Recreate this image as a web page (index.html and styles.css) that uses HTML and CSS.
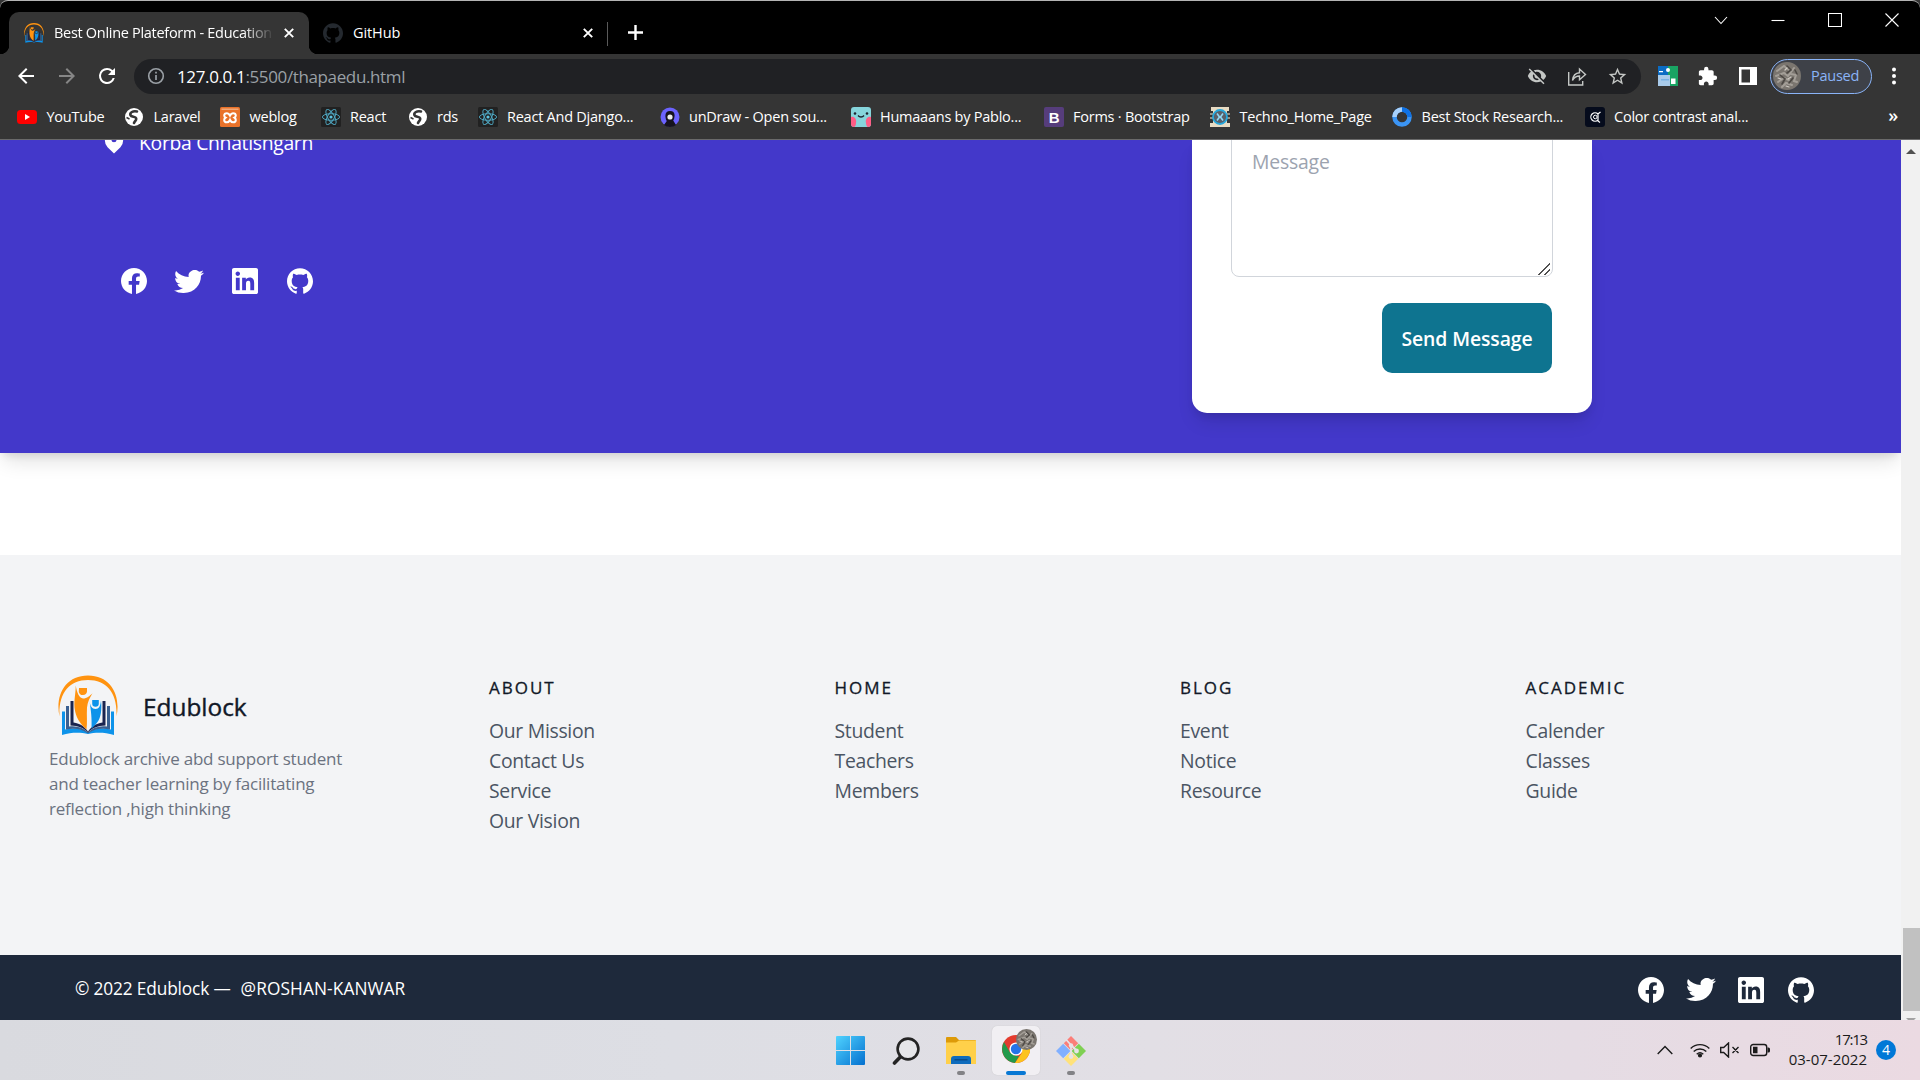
FILE: index.html
```
<!DOCTYPE html>
<html lang="en">
<head>
<meta charset="utf-8">
<title>Best Online Plateform - Education</title>
<link rel="stylesheet" href="styles.css">
</head>
<body>
<svg class="defs" aria-hidden="true">
  <defs>
    <symbol id="facebook" viewBox="0 0 24 24"><path d="M24 12.073c0-6.627-5.373-12-12-12s-12 5.373-12 12c0 5.990 4.388 10.954 10.125 11.854v-8.385H7.078v-3.470h3.047V9.430c0-3.007 1.792-4.669 4.533-4.669 1.312 0 2.686.235 2.686.235v2.953H15.830c-1.491 0-1.956.925-1.956 1.874v2.250h3.328l-.532 3.470h-2.796v8.385C19.612 23.027 24 18.062 24 12.073z"/></symbol>
    <symbol id="twitter" viewBox="0 2.250 24 19.500" preserveAspectRatio="none"><path d="M23.953 4.57a10 10 0 01-2.825.775 4.958 4.958 0 002.163-2.723c-.951.555-2.005.959-3.127 1.184a4.92 4.92 0 00-8.384 4.482C7.69 8.095 4.067 6.13 1.64 3.162a4.822 4.822 0 00-.666 2.475c0 1.71.87 3.213 2.188 4.096a4.904 4.904 0 01-2.228-.616v.06a4.923 4.923 0 003.946 4.827 4.996 4.996 0 01-2.212.085 4.936 4.936 0 004.604 3.417 9.867 9.867 0 01-6.102 2.105c-.39 0-.779-.023-1.17-.067a13.995 13.995 0 007.557 2.209c9.053 0 13.998-7.496 13.998-13.985 0-.21 0-.42-.015-.63A9.935 9.935 0 0024 4.59z"/></symbol>
    <symbol id="linkedin" viewBox="0 0 24 24"><path d="M20.447 20.452h-3.554v-5.569c0-1.328-.027-3.037-1.852-3.037-1.853 0-2.136 1.445-2.136 2.939v5.667H9.351V9h3.414v1.561h.046c.477-.9 1.637-1.85 3.37-1.85 3.601 0 4.267 2.37 4.267 5.455v6.286zM5.337 7.433c-1.144 0-2.063-.926-2.063-2.065 0-1.138.92-2.063 2.063-2.063 1.14 0 2.064.925 2.064 2.063 0 1.139-.925 2.065-2.064 2.065zm1.782 13.019H3.555V9h3.564v11.452zM22.225 0H1.771C.792 0 0 .774 0 1.729v20.542C0 23.227.792 24 1.771 24h20.451C23.2 24 24 23.227 24 22.271V1.729C24 .774 23.2 0 22.222 0h.003z"/></symbol>
    <symbol id="github" viewBox="0 0 24 24"><path d="M12 .297c-6.63 0-12 5.373-12 12 0 5.303 3.438 9.8 8.205 11.385.6.113.82-.258.82-.577 0-.285-.01-1.04-.015-2.04-3.338.724-4.042-1.61-4.042-1.61C4.422 18.07 3.633 17.7 3.633 17.7c-1.087-.744.084-.729.084-.729 1.205.084 1.838 1.236 1.838 1.236 1.07 1.835 2.809 1.305 3.495.998.108-.776.417-1.305.76-1.605-2.665-.3-5.466-1.332-5.466-5.93 0-1.31.465-2.38 1.235-3.22-.135-.303-.54-1.523.105-3.176 0 0 1.005-.322 3.3 1.23.96-.267 1.98-.399 3-.405 1.02.006 2.04.138 3 .405 2.28-1.552 3.285-1.23 3.285-1.23.645 1.653.24 2.873.12 3.176.765.84 1.23 1.91 1.23 3.22 0 4.61-2.805 5.625-5.475 5.92.42.36.81 1.096.81 2.22 0 1.606-.015 2.896-.015 3.286 0 .315.21.69.825.57C20.565 22.092 24 17.592 24 12.297c0-6.627-5.373-12-12-12"/></symbol>
    <symbol id="logo" viewBox="0 0 60 60">
      <path fill="#ff9310" d="M1.500 41C-3 20 7 0 30 0s33 20 28.500 41C59.500 18 49 4.500 30 4.500S.5 18 1.500 41z"/>
      <path fill="#0d93ea" d="M4 36h3v18c9-2 17-1 23 3 6-4 14-5 23-3V36h3v23.500c-10-3-19-2.500-26-1-7-1.500-16-2-26 1z"/>
      <path fill="#3a6091" d="M8 30.500h3V51c8-1 14 1 19 6 5-5 11-7 19-6V30.500h3V54c-9-2-17 0-22 4-5-4-13-6-22-4z"/>
      <path fill="#1a2450" d="M12.500 25.500h3V47c7 1 11 4 14.500 9 3.500-5 7.500-8 14.500-9V25.500h3V50c-8 0-14 3-17.500 7-3.500-4-9.500-7-17.500-7z"/>
      <path class="paper" d="M16 22h28v24c-7 1-11 4-14 9-3-5-7-8-14-9z"/>
      <path fill="#ff9310" d="M17.700 10C19 17 21 22.500 25 23c4 0 7-3 9.500-5.300C32 22 29.500 26 29 32c-.5 8 .5 15-.5 22C22 48 17.500 42 16.500 32 16 23 17.800 18 17.700 10z"/>
      <path fill="#ff9310" d="M21 12.500h8v3.500a4.200 4.200 0 0 1-8.200.5z"/>
      <path fill="#0d93ea" d="M31.500 25C32 30 34 33.500 37.500 33.500S42.500 30 43 25c1 9 0 17-3.500 21.500-2.500 3.500-4 4.500-6 6.500C34 42 33 36 31.500 25z"/>
      <path fill="#0d93ea" d="M34.200 24.500h6.600V28a3.300 3.300 0 0 1-6.600 0z"/>
    </symbol>
    <symbol id="globe" viewBox="0 0 20 20"><circle cx="10" cy="10" r="9" fill="#fff"/><path d="M13 4.500C9 3.500 5.500 5.600 6.500 8.200c.8 2 5.100 1 5.700 3.100.5 1.900-1.500 2.800-2.200 4.700" fill="none" stroke="#353535" stroke-width="2.600" stroke-linecap="round"/><path d="M2.500 10.500l3 1.500" stroke="#353535" stroke-width="1.500"/></symbol>
    <symbol id="react" viewBox="0 0 20 20"><rect width="20" height="20" rx="1.500" fill="#212121"/><g fill="none" stroke="#4fa9c4" stroke-width=".95"><ellipse cx="10" cy="10" rx="8.600" ry="3.300"/><ellipse cx="10" cy="10" rx="8.600" ry="3.300" transform="rotate(60 10 10)"/><ellipse cx="10" cy="10" rx="8.600" ry="3.300" transform="rotate(120 10 10)"/></g><circle cx="10" cy="10" r="1.600" fill="#5cc4e2"/></symbol>
    <symbol id="close" viewBox="0 0 10 10"><path d="M.8.8l8.400 8.400M9.200.8L.8 9.200" stroke="#fff" stroke-width="1.900" fill="none"/></symbol>
    <symbol id="avatar" viewBox="0 0 28 28"><circle cx="14" cy="14" r="14" fill="#7a756f"/><g fill="none" stroke-linecap="round"><path d="M4 9l7-5 5 4M3 14l8-3 4 3 6-8M5 20l6-4 5 2M9 25l4-4 6 2M18 12l5 1-2 6 3 1" stroke="#a39e97" stroke-width="2"/><path d="M7 13l5 4-3 5M14 4l4 4-4 3M20 16l-4 5M22 8l2 4" stroke="#4b4743" stroke-width="1.600"/><path d="M5 16l3 1M12 8l2-2M15 17l3-2M13 24l3 1" stroke="#cfcac3" stroke-width="1.200"/></g></symbol>
  </defs>
</svg>

<header class="browser">
  <div class="titlebar">
    <div class="tab active">
      <svg class="favicon" width="20" height="20"><use href="#logo"/></svg>
      <span class="tab-title fade">Best Online Plateform - Education</span>
      <svg class="x" width="10" height="10"><use href="#close"/></svg>
    </div>
    <div class="tab idle">
      <svg class="gh" width="20" height="20"><use href="#github"/></svg>
      <span class="tab-title">GitHub</span>
      <svg class="x" width="10" height="10"><use href="#close"/></svg>
    </div>
    <svg class="newtab" width="15" height="15" viewBox="0 0 15 15"><path d="M7.500 0v15M0 7.500h15" stroke="#fff" stroke-width="2.400"/></svg>
    <div class="window-controls">
      <svg width="14" height="14" viewBox="0 0 14 14"><path d="M1 4l6 6.500L13 4"/></svg>
      <svg width="14" height="14" viewBox="0 0 14 14"><path d="M.5 7.500h13"/></svg>
      <svg width="14" height="14" viewBox="0 0 14 14"><path d="M.5.5h13v13H.5z"/></svg>
      <svg width="14" height="14" viewBox="0 0 14 14"><path d="M.5.5l13 13M13.500.5l-13 13"/></svg>
    </div>
  </div>

  <div class="toolbar">
    <div class="nav">
      <svg width="24" height="24" viewBox="0 0 24 24" fill="#fff"><path d="M20 11H7.830l5.590-5.590L12 4l-8 8 8 8 1.410-1.410L7.830 13H20v-2z"/></svg>
      <svg width="24" height="24" viewBox="0 0 24 24" fill="#868686"><path d="M4 11h12.170l-5.590-5.590L12 4l8 8-8 8-1.410-1.410L16.170 13H4v-2z"/></svg>
      <svg width="24" height="24" viewBox="0 0 24 24" fill="#fff"><path d="M17.650 6.350A7.958 7.958 0 0 0 12 4a8 8 0 1 0 7.730 10h-2.080A6 6 0 1 1 12 6c1.660 0 3.140.69 4.220 1.780L13 11h7V4l-2.350 2.350z"/></svg>
    </div>
    <div class="omnibox">
      <svg width="18" height="18" viewBox="0 0 18 18"><circle cx="9" cy="9" r="7.300" fill="none" stroke="#9aa0a6" stroke-width="1.600"/><path d="M9 8v5M9 4.800v1.700" stroke="#9aa0a6" stroke-width="1.700"/></svg>
      <span class="url"><b>127.0.0.1</b>:5500/thapaedu.html</span>
      <div class="omni-actions">
        <svg width="20" height="20" viewBox="0 0 24 24" fill="#c4c7c5"><path d="M12 7c2.760 0 5 2.240 5 5 0 .65-.13 1.260-.36 1.830l2.920 2.920c1.510-1.260 2.700-2.890 3.430-4.750-1.730-4.390-6-7.500-11-7.500-1.400 0-2.740.25-3.980.7l2.160 2.160C10.740 7.130 11.350 7 12 7zM2 4.270l2.740 2.740C3.080 8.300 1.780 10.020 1 12c1.730 4.390 6 7.500 11 7.500 1.550 0 3.030-.3 4.380-.84l3.350 3.340L21 20.730 3.270 3 2 4.270zM7.530 9.800l1.550 1.550c-.05.21-.08.43-.08.65 0 1.660 1.340 3 3 3 .22 0 .44-.03.65-.08l1.550 1.550c-.67.33-1.410.53-2.200.53-2.760 0-5-2.240-5-5 0-.79.2-1.530.53-2.200z"/></svg>
        <svg width="20" height="20" viewBox="0 0 20 20" fill="none" stroke="#c4c7c5" stroke-width="1.400"><path d="M1.700 6v13h14v-4"/><path d="M5.500 14.500c.5-5 3-7.500 7-7.700V3l6 5.500-6 5.300V10c-3 0-5.300 1.200-7 4.500z"/></svg>
        <svg width="21" height="21" viewBox="0 0 24 24" fill="#c4c7c5"><path d="M22 9.240l-7.190-.62L12 2 9.190 8.630 2 9.240l5.460 4.730L5.820 21 12 17.270 18.180 21l-1.630-7.030L22 9.240zM12 15.400l-3.760 2.270 1-4.280-3.320-2.880 4.380-.38L12 6.100l1.710 4.040 4.380.38-3.320 2.880 1 4.280L12 15.400z"/></svg>
      </div>
    </div>
    <svg class="ext" width="20" height="20" viewBox="0 0 20 20"><path fill="#0b6cc4" d="M0 0h10v10H0z"/><path fill="#19a463" d="M10 0h10v20H10z"/><path fill="#a9cbea" d="M0 9h12v11H0z"/><path fill="#79b2e4" d="M3 13h8v1.500H3z"/><circle cx="10" cy="4" r="2" fill="#fff"/><path d="M13 12.500h4.500V18H13zM1 5h4v1.300H1z" fill="#fff"/></svg>
    <svg class="puzzle" width="20" height="20" viewBox="1 0 23 23" fill="#fff"><path d="M20.500 11H19V7c0-1.100-.9-2-2-2h-4V3.500a2.500 2.500 0 0 0-5 0V5H4c-1.100 0-1.990.9-1.990 2v3.800H3.500c1.490 0 2.700 1.210 2.700 2.700s-1.210 2.700-2.700 2.700H2V20c0 1.100.9 2 2 2h3.800v-1.500c0-1.490 1.210-2.700 2.700-2.700 1.490 0 2.700 1.210 2.700 2.700V22H17c1.100 0 2-.9 2-2v-4h1.500a2.500 2.500 0 0 0 0-5z"/></svg>
    <svg class="panel" width="18" height="18" viewBox="0 0 18 18"><path fill="#fff" fill-rule="evenodd" d="M0 0h18v18H0zM2.500 2.500v13h8.500v-13z"/></svg>
    <div class="profile"><svg width="28" height="28"><use href="#avatar"/></svg><span>Paused</span></div>
    <svg class="kebab" width="6" height="18" viewBox="0 0 6 18" fill="#fff"><circle cx="3" cy="2.500" r="2"/><circle cx="3" cy="9" r="2"/><circle cx="3" cy="15.500" r="2"/></svg>
  </div>

  <nav class="bookmarks">
    <a><svg width="20" height="20" viewBox="0 0 20 20"><rect y="3" width="20" height="14" rx="3.500" fill="#f00"/><path d="M8 7l5 3-5 3z" fill="#fff"/></svg>YouTube</a>
    <a><svg width="20" height="20"><use href="#globe"/></svg>Laravel</a>
    <a><svg width="20" height="20" viewBox="0 0 20 20"><rect width="20" height="20" rx="1.500" fill="#e9722a"/><path fill="#f2a877" d="M1.500 1.500h17V3h-17z"/><path d="M7 6.200c-1.700 0-2.800 1-2.800 2.400 0 1 .6 1.700 1.400 2.100-.8.500-1.400 1.100-1.400 2.200 0 1.400 1.100 2.400 2.800 2.400 2 0 2.500-1.400 3-2.500.5 1.100 1 2.500 3 2.500 1.700 0 2.800-1 2.800-2.400 0-1.100-.6-1.700-1.400-2.200.8-.4 1.400-1.100 1.400-2.100 0-1.400-1.100-2.400-2.800-2.400-2 0-2.500 1.400-3 2.500-.5-1.100-1-2.500-3-2.500z" fill="none" stroke="#fff" stroke-width="2"/></svg>weblog</a>
    <a><svg width="20" height="20"><use href="#react"/></svg>React</a>
    <a><svg width="20" height="20"><use href="#globe"/></svg>rds</a>
    <a><svg width="20" height="20"><use href="#react"/></svg>React And Django...</a>
    <a><svg width="20" height="20" viewBox="0 0 20 20"><circle cx="10" cy="10" r="9.500" fill="#6c63ff"/><path d="M10 4c-3.500 0-5 2.500-4.500 6 .3 2 .5 3 1.300 4L4 18c3 2.500 9 2.500 12 0l-2.800-4.500c.8-1 1-2 1.300-4 .5-3.500-1-5.500-4.500-5.500z" fill="#16131f"/><ellipse cx="10" cy="10" rx="2.600" ry="2.600" fill="#eee"/></svg>unDraw - Open sou...</a>
    <a><svg width="20" height="20" viewBox="0 0 20 20"><rect width="20" height="20" rx="3" fill="#86d5dc"/><path d="M0 10c3-1 6 2 5 6 0 2-1 4-2 4-2 0-3-1-3-3zM20 10c-3-1-6 2-5 6 0 2 1 4 2 4 2 0 3-1 3-3z" fill="#ff5d86"/><path d="M7 8.500c1.500 2 4.500 2 6 0" fill="none" stroke="#1f2430" stroke-width="1.300"/><circle cx="4" cy="6.500" r="1.300" fill="#1f2430"/><circle cx="16" cy="6.500" r="1.300" fill="#1f2430"/></svg>Humaaans by Pablo...</a>
    <a><svg width="20" height="20" viewBox="0 0 20 20"><rect width="20" height="20" rx="2" fill="#563d7c"/><text x="10" y="15.500" text-anchor="middle" class="bs">B</text></svg>Forms · Bootstrap</a>
    <a><svg width="20" height="20" viewBox="0 0 20 20"><path fill="#e8dcc4" d="M1 0h18v4h-2v12h3v4H0v-4h3V4H1z"/><path d="M0 7h3M0 11h3M17 7h3M17 11h3" stroke="#b7b0a0" stroke-width="1.500"/><circle cx="10" cy="10" r="7" fill="#5a5f68" stroke="#26a7dc" stroke-width="1.800"/><path d="M7 6.500l2.500 3.500L7 13.500M13 6.500L10.500 10l2.500 3.500" fill="none" stroke="#8fd8f5" stroke-width="1.600"/></svg>Techno_Home_Page</a>
    <a><svg width="20" height="20" viewBox="0 0 20 20" fill="none" stroke-width="4.500"><circle cx="10" cy="10" r="7.500" stroke="#3b95f5"/><path d="M2.500 10A7.500 7.500 0 0 1 10 2.500" stroke="#a8d1fb"/><path d="M10 2.500a7.500 7.500 0 0 1 7.500 7.500" stroke="#0f72e5"/></svg>Best Stock Research...</a>
    <a><svg width="20" height="20" viewBox="0 0 20 20"><rect width="20" height="20" rx="3" fill="#050b1c"/><path d="M13 7a4.200 4.200 0 1 0 0 6M13 6v8l2 1.500M13.500 6.500L15.500 5" fill="none" stroke="#fff" stroke-width="1.200"/><circle cx="10.300" cy="10" r="1.800" fill="none" stroke="#fff"/></svg>Color contrast anal...</a>
    <span class="more">»</span>
  </nav>
</header>

<div class="viewport">
  <main class="page">
    <section class="contact">
      <div class="contact-info">
        <p class="address"><svg width="26" height="26" viewBox="0 0 20 20" fill="#fff"><path fill-rule="evenodd" d="M5.050 4.050a7 7 0 1 1 9.900 9.900L10 18.900l-4.950-4.950a7 7 0 0 1 0-9.900zM10 10.200a2 2 0 1 0 0-4 2 2 0 0 0 0 4z"/></svg>Korba Chhatishgarh</p>
        <div class="social large">
          <svg width="26" height="26"><use href="#facebook"/></svg>
          <svg class="tw" width="30" height="23"><use href="#twitter"/></svg>
          <svg width="26" height="26"><use href="#linkedin"/></svg>
          <svg width="26" height="26"><use href="#github"/></svg>
        </div>
      </div>
      <form class="card">
        <textarea placeholder="Message"></textarea>
        <button type="button">Send Message</button>
      </form>
    </section>

    <footer class="footer">
      <div class="brand">
        <div class="brand-row"><svg width="60" height="61"><use href="#logo"/></svg><span>Edublock</span></div>
        <p>Edublock archive abd support student<br>and teacher learning by facilitating<br>reflection ,high thinking</p>
      </div>
      <div class="col"><h2>ABOUT</h2><a>Our Mission</a><a>Contact Us</a><a>Service</a><a>Our Vision</a></div>
      <div class="col"><h2>HOME</h2><a>Student</a><a>Teachers</a><a>Members</a></div>
      <div class="col"><h2>BLOG</h2><a>Event</a><a>Notice</a><a>Resource</a></div>
      <div class="col"><h2>ACADEMIC</h2><a>Calender</a><a>Classes</a><a>Guide</a></div>
    </footer>

    <div class="copyright">
      <p>© 2022 Edublock —<span>@ROSHAN-KANWAR</span></p>
      <div class="social">
        <svg width="26" height="26"><use href="#facebook"/></svg>
        <svg class="tw" width="30" height="23"><use href="#twitter"/></svg>
        <svg width="26" height="26"><use href="#linkedin"/></svg>
        <svg width="26" height="26"><use href="#github"/></svg>
      </div>
    </div>
  </main>
  <div class="scrollbar">
    <svg width="10" height="5" viewBox="0 0 10 5"><path d="M0 5l5-5 5 5z" fill="#505050"/></svg>
    <div class="thumb"></div>
    <svg width="10" height="5" viewBox="0 0 10 5"><path d="M0 0h10L5 5z" fill="#a3a3a3"/></svg>
  </div>
</div>

<div class="taskbar">
  <div class="apps">
    <div class="app"><svg width="29" height="29" viewBox="0 0 29 29"><defs><linearGradient id="win" x1="0" y1="0" x2="1" y2="1" gradientUnits="objectBoundingBox"><stop offset="0" stop-color="#50d3ff"/><stop offset="1" stop-color="#0470cf"/></linearGradient></defs><path fill="url(#win)" d="M1 0h13v14H0V1a1 1 0 0 1 1-1zM15 0h13a1 1 0 0 1 1 1v13H15zM0 15h14v14H1a1 1 0 0 1-1-1zM15 15h14v13a1 1 0 0 1-1 1H15z"/></svg></div>
    <div class="app"><svg width="28" height="28" viewBox="0 0 28 28"><circle cx="16" cy="12" r="10.400" fill="#e6e6e9" stroke="#242424" stroke-width="2.600"/><path d="M8.300 20L2.500 26" stroke="#242424" stroke-width="3.600" stroke-linecap="round"/></svg></div>
    <div class="app"><svg width="30" height="28" viewBox="0 0 30 28"><path fill="#dd9a08" d="M1 0h9l3 3h16a1 1 0 0 1 1 1v6H0V1a1 1 0 0 1 1-1z"/><path fill="#ffd04a" d="M0 5.500h10l3-2h17V27H0z"/><path fill="#0f6cbd" d="M8 19h14a3 3 0 0 1 3 3v5H5v-5a3 3 0 0 1 3-3z"/><path d="M8.500 22.800h13" stroke="#08457f" stroke-width="1.200"/></svg><i class="dot"></i></div>
    <div class="app current"><svg width="28" height="28" viewBox="0 0 28 28"><circle cx="14" cy="14" r="14" fill="#e33b2e"/><path fill="#239a4b" d="M2 7l6 10.500 6 3.500 3 0-4 7A14 14 0 0 1 2 7z"/><path fill="#fcc31e" d="M14 7.300h12.300A14 14 0 0 1 13 28l7-10.500z"/><circle cx="14" cy="14" r="6.600" fill="#fff"/><circle cx="14" cy="14" r="5.200" fill="#2674e8"/></svg><svg class="badge-avatar" width="21" height="21"><use href="#avatar"/></svg><i class="bar"></i></div>
    <div class="app"><svg width="30" height="30" viewBox="0 0 30 30"><path fill="#fb7e79" d="M15 0l7.200 7.200L15 14.400 7.800 7.200z"/><path fill="#81b0ff" d="M7.200 7.800l7.200 7.200-7.200 7.200L0 15z"/><path fill="#7fd053" d="M22.800 7.800L30 15l-7.200 7.200-7.200-7.200z"/><path fill="#ffe27a" d="M15 15.600l7.200 7.200L15 30l-7.200-7.200z"/><path d="M10 3.500l5 5.500v12M15.500 9.500l5 5" stroke="#e6e3e8" stroke-width="1.800" fill="none"/><g fill="#e6e3e8"><circle cx="15" cy="9.500" r="2.200"/><circle cx="20.500" cy="15" r="2.400"/><circle cx="15" cy="20.500" r="2.400"/></g></svg><i class="dot"></i></div>
  </div>
  <div class="tray">
    <svg width="16" height="10" viewBox="0 0 16 10"><path d="M.7 9L8 1.500 15.300 9"/></svg>
    <svg class="wifi" width="20" height="16" viewBox="0 0 20 16"><path d="M.7 6.500a13 13 0 0 1 18.600 0M3.700 9.500a9 9 0 0 1 12.600 0M6.700 12.300a5 5 0 0 1 6.600 0"/><circle cx="10" cy="13.500" r="1.400" fill="#1b1b1b"/></svg>
    <svg class="vol" width="20" height="16" viewBox="0 0 20 16"><path d="M.7 5.500v5h3L8.500 15V1L3.700 5.500zM12.500 5l6 6M18.500 5l-6 6"/></svg>
    <svg class="bat" width="20" height="14" viewBox="0 0 20 14"><rect x=".7" y="1.500" width="16" height="11" rx="2.500"/><path fill="#1b1b1b" stroke="none" d="M3 3.800h4.500v6.400H3zM17.500 4.500h1a1.500 1.500 0 0 1 1.500 1.500v2a1.500 1.500 0 0 1-1.500 1.500h-1z"/></svg>
    <div class="clock"><span class="time">17:13</span><span>03-07-2022</span></div>
    <span class="count">4</span>
  </div>
</div>
</body>
</html>
```

FILE: styles.css
```
* { box-sizing: border-box; margin: 0; padding: 0; }
body {
  width: 1920px; height: 1080px; overflow: hidden;
  display: flex; flex-direction: column;
  font-family: "Open Sans", "Noto Sans", sans-serif;
  font-size: 14.5px; letter-spacing: -.24px; color: #fff;
  background: #fff;
}
svg { display: block; flex: none; }
a, span { white-space: nowrap; }
.defs { position: absolute; width: 0; height: 0; }
.paper { fill: var(--paper, #f3f4f6); }

/* browser chrome */
.browser { height: 140px; background: #353535; border-bottom: 1px solid #6a6a6a; flex: none; }
.titlebar { height: 54px; background: #000; border-top: 1px solid #b4b4b4; display: flex; align-items: flex-end; padding-left: 9px; border-radius: 8px 8px 0 0; }
.tab { height: 42px; display: flex; align-items: center; width: 300px; padding-bottom: 1px; }
.tab.active { background: #353535; border-radius: 10px 10px 0 0; padding-left: 15px; position: relative; }
.tab.active::before, .tab.active::after { content: ""; position: absolute; bottom: 0; width: 9px; height: 9px; }
.tab.active::before { left: -9px; background: radial-gradient(circle at 0 0, #000 9px, #353535 9.500px); }
.tab.active::after { right: -9px; background: radial-gradient(circle at 100% 0, #000 9px, #353535 9.500px); }
.tab.idle { padding-left: 14px; width: 299px; background: linear-gradient(#5a5a5a, #5a5a5a) right 10px/1px 24px no-repeat; }
.gh { fill: #24292f; }
.favicon { --paper: #353535; }
.tab-title { width: 220px; margin-left: 10px; overflow: hidden; letter-spacing: -.3px; padding-bottom: 1px; }
.tab.idle .tab-title { letter-spacing: -.1px; }
.fade { -webkit-mask-image: linear-gradient(90deg, #000 86%, transparent 100%); mask-image: linear-gradient(90deg, #000 86%, transparent 100%); }
.x { margin-left: 10px; }
.newtab { margin: 0 0 14px 20px; }
.window-controls { margin-left: auto; align-self: flex-start; display: flex; gap: 43px; padding: 12px 21px 0 0; }
.window-controls svg { fill: none; stroke: #fff; stroke-width: 1.100; }

.toolbar { height: 45px; display: flex; align-items: center; padding: 0 23px 1px 14px; }
.nav { display: flex; gap: 16.500px; width: 120px; }
.omnibox { width: 1507px; height: 35px; border-radius: 18px; background: #202124; display: flex; align-items: center; padding: 0 13px 0 13px; }
.url { font-size: 17px; margin-left: 12px; color: #9aa0a6; letter-spacing: -.37px; }
.url b { font-weight: 400; color: #fff; }
.omni-actions { margin-left: auto; display: flex; align-items: center; gap: 20px; }
.ext { margin-left: 17px; }
.puzzle { margin-left: 20px; }
.panel { margin-left: 21px; }
.profile { margin-left: 13px; width: 102px; height: 35px; border: 1.500px solid #8ab4f8; border-radius: 18px; background: #3e4148; color: #8ab4f8; display: flex; align-items: center; gap: 10px; padding-left: 2px; }
.profile span { padding-bottom: 1px; }
.kebab { margin-left: auto; }

.bookmarks { height: 36px; padding: 0 22px 1px 17px; display: grid; align-items: center; grid-template-columns: 107px 96px 100.500px 87px 70px 182px 191px 193px 166.500px 182px 192.500px 1fr auto; }
.bookmarks a { display: flex; align-items: center; gap: 9.500px; line-height: 20px; }
.bs { font: 700 15px "Liberation Sans", sans-serif; fill: #fff; }
.more { font-size: 18px; font-weight: 600; line-height: 20px; padding-bottom: 4px; }

/* page */
.viewport { height: 880px; display: flex; flex: none; }
.page { width: 1901px; height: 880px; overflow: hidden; background: #fff; }
.contact { height: 313px; background: #4338ca; box-shadow: 0 12px 19px -4px rgba(0,0,0,.12), 0 5px 8px -3px rgba(0,0,0,.1); display: flex; align-items: flex-start; }
.contact-info { width: 1192px; padding-left: 101px; }
.address { display: flex; align-items: center; gap: 12px; height: 30px; margin-top: -13px; font-size: 19.400px; letter-spacing: -.33px; }
.social { display: flex; align-items: center; fill: #fff; gap: 24px; }
.social .tw { margin: 0 -2px 0 -2px; }
.social.large { margin: 111px 0 0 20px; gap: 29px; }
.social.large .tw { margin: 0 -1px 0 -2px; }
.card { width: 400px; height: 273px; background: #fff; border-radius: 0 0 15px 15px; box-shadow: 0 12px 19px -4px rgba(0,0,0,.12), 0 5px 8px -3px rgba(0,0,0,.1); display: flex; flex-direction: column; align-items: flex-end; padding: 0 39px; }
textarea { width: 322px; height: 150px; margin-top: -13px; border: 1px solid #d1d5db; border-radius: 8px; padding: 20px; font: 19.400px/28px "Open Sans", sans-serif; letter-spacing: -.2px; color: #374151; background: #fff; flex: none; resize: vertical; }
textarea::placeholder { color: #9ca3af; }
textarea::-webkit-resizer { background: linear-gradient(135deg, transparent 46%, #505050 46%, #505050 55%, transparent 55%, transparent 72%, #505050 72%, #505050 81%, transparent 81%) 1px 2px / 12px 12px no-repeat; }
button { width: 170px; height: 70px; margin: 26px 1px 0 0; border: 0; border-radius: 10px; background: #0e7490; color: #fff; font: 600 19.400px "Open Sans", sans-serif; letter-spacing: -.1px; }

.footer { margin-top: 102px; height: 400px; background: #f3f4f6; display: grid; grid-template-columns: 440px 345.500px 345.500px 345.500px 1fr; padding: 120px 0 0 49px; color: #4b5563; }
.brand-row { display: flex; align-items: center; padding-left: 9px; height: 61px; font-size: 24.400px; color: #111827; letter-spacing: 0; -webkit-text-stroke: .4px #111827; }
.brand-row svg { margin-top: -1px; }
.brand-row span { margin: 1px 0 0 25px; }
.brand p { margin-top: 10px; font-size: 17px; line-height: 25px; color: #6b7280; letter-spacing: -.22px; }
.col { display: flex; flex-direction: column; font-size: 19.400px; line-height: 30px; letter-spacing: -.3px; }
.col h2 { font-size: 17px; line-height: 25px; font-weight: 400; letter-spacing: 2px; color: #111827; -webkit-text-stroke: .3px #111827; margin-bottom: 16px; }
.copyright { height: 65px; background: #1e293b; display: flex; align-items: center; justify-content: space-between; padding: 0 87px 0 75px; font-size: 17.300px; letter-spacing: -.15px; }
.copyright p { padding-top: 2px; }
.copyright span { margin-left: 10px; letter-spacing: .1px; }
.copyright .social { padding-top: 4px; }

.scrollbar { width: 19px; background: #f1f1f1; display: flex; flex-direction: column; align-items: center; padding-top: 9px; }
.thumb { width: 17px; height: 83px; margin: 774px 0 7px 2px; background: #c1c1c1; flex: none; }

/* taskbar */
.taskbar { height: 60px; flex: none; position: relative; display: flex; justify-content: center; background: linear-gradient(90deg, #d9dadf, #dddee4 35%, #e2dfe5 60%, #e5dce4 82%, #ebdae2); color: #1b1b1b; }
.apps { display: flex; gap: 7px; padding: 6px 0 0 1px; }
.app { width: 48px; height: 49px; display: flex; align-items: center; justify-content: center; position: relative; }
.current { background: #f1eff3; border-radius: 5px; box-shadow: 0 0 1px #bbb; }
.current > svg:first-child { margin-top: -3px; }
.dot, .bar { position: absolute; bottom: 0; height: 4px; border-radius: 2px; left: 20px; width: 8px; background: #828286; }
.bar { left: 14px; width: 20px; background: #0878d4; }
.badge-avatar { position: absolute; left: 24px; top: 3px; }
.tray { position: absolute; right: 24px; top: 0; height: 60px; display: flex; align-items: center; }
.tray svg { fill: none; stroke: #1b1b1b; stroke-width: 1.400; }
.wifi { margin-left: 17px; }
.vol { margin-left: 10px; }
.bat { margin-left: 10px; }
.clock { width: 97px; display: flex; flex-direction: column; align-items: flex-end; line-height: 20px; font-size: 15px; letter-spacing: 0; padding-bottom: 2px; }
.time { letter-spacing: -1.200px; }
.count { width: 20px; height: 20px; border-radius: 50%; background: #0078d7; color: #fff; text-align: center; line-height: 20px; margin-left: 9px; letter-spacing: 0; font-size: 14px; }
```
